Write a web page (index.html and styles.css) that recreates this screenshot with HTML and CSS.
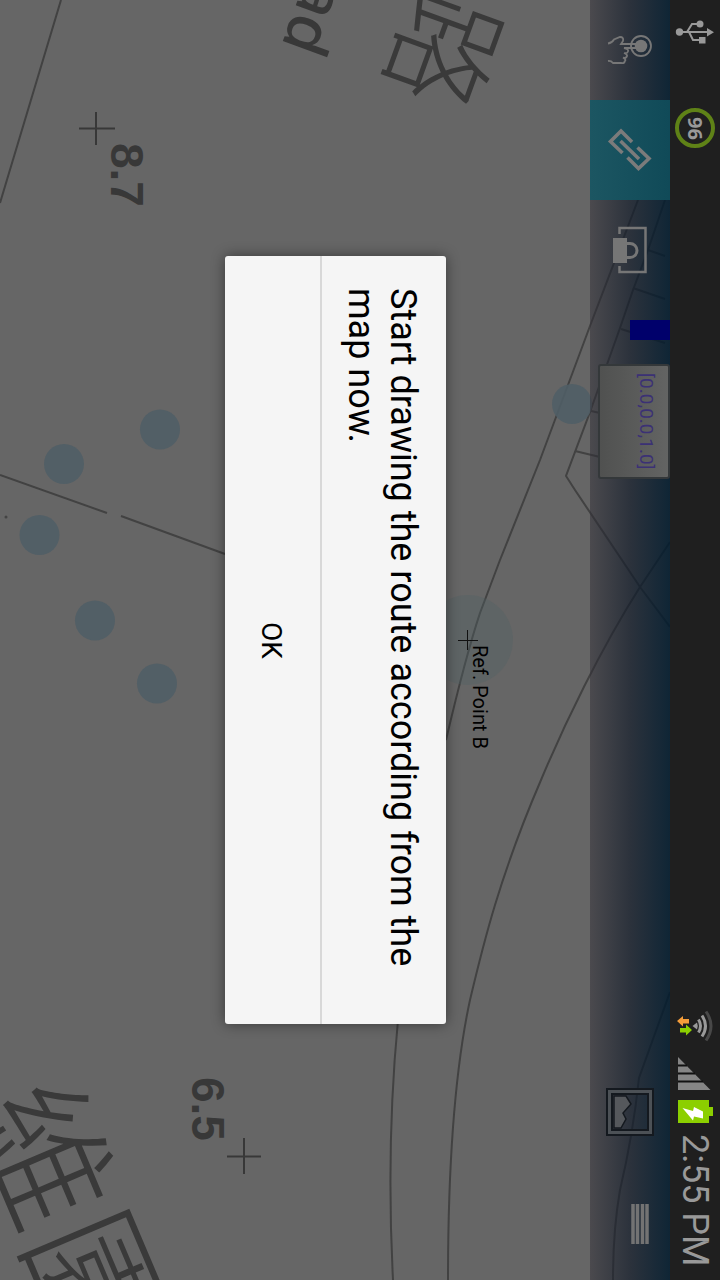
FILE: index.html
```html
<!DOCTYPE html>
<html lang="en">
<head>
<meta charset="utf-8">
<meta name="viewport" content="width=device-width, initial-scale=1">
<title>Route map</title>
<link rel="stylesheet" href="styles.css">
</head>
<body>
<div class="screen">
  <header class="status">
    <svg class="status-usb" viewBox="674 12 42 42" aria-label="USB connected">
      <g fill="none" stroke="#999" stroke-width="2"><path d="M680 32H708M687 32L692 24H699M689 32L693 40H700"/></g>
      <g fill="#999"><circle cx="679.500" cy="32" r="3.700"/><circle cx="700" cy="24" r="3.500"/><path d="M699 37h6.500v6.500H699zM707 28l7 4.300-7 4.300z"/></g>
    </svg>
    <div class="charge"><span>96</span></div>
    <div class="status-end">
      <svg class="status-wifi" viewBox="674 1004 42 40" aria-label="Wi-Fi">
        <path d="M677 1019l6-5v3h6v4.500h-6v3z" fill="#f59d3a"/>
        <path d="M692 1028l-6 5.500v-3h-6v-4.500h6v-3.500z" fill="#8ccf00"/>
        <path d="M692.500 1024L697 1020.500Q698.500 1024 697 1027.500z" fill="#999"/>
        <g fill="none" stroke-width="3">
          <path d="M698.500 1017.500Q702.500 1024 698.500 1030.500" stroke="#999"/>
          <path d="M702 1013.500Q709 1024 702 1034.500" stroke="#999"/>
          <path d="M706 1009.500Q716 1024 706 1038.500" stroke="#484848"/>
        </g>
      </svg>
      <svg class="status-signal" viewBox="674 1052 42 40" aria-label="Signal">
        <path d="M678 1055V1088H710.500z" fill="#858585"/>
        <path d="M678 1063.500H687M678 1071.500H695M678 1079.500H703" stroke="#111" stroke-width="2"/>
      </svg>
      <svg class="status-battery" viewBox="674 1092 42 34" aria-label="Charging">
        <path d="M678 1098H709V1105H713V1114H709V1121H678z" fill="#8ccf00"/>
        <path d="M682.500 1106l10.500 3 1-4 9 4.500v7l-9-2-1 4z" fill="#fff"/>
      </svg>
      <time class="clock">2:55 PM</time>
    </div>
  </header>

  <main class="stage">
    <svg class="map" viewBox="0 0 670 1280" preserveAspectRatio="xMaxYMid slice" aria-label="Map">
      <g class="road">
        <path d="M61 0L0 203M0 475L107 513M121 516L225 554M638 200L590 326 540 460 500 560 480 613Q466 655 446 740"/>
        <path d="M665 200L648 250 633 290 620 328 590 412 566 476 575 490 640 587 670 627"/>
        <path d="M648 250L665 256M633 288L665 299M621 329L665 343M591 411L600 413M575 451L600 457"/>
        <path d="M670 542L640 587C600 650 564 725 541 780 500 875 483 945 470 1000 457 1060 448 1150 448 1280"/>
        <path d="M398 1020Q386 1145 393 1280M670 992L639 1078Q633 1135 620 1190 613 1230 613 1280"/>
      </g>
      <circle cx="6" cy="517" r="1.500" fill="#444"/>
      <path class="cross" d="M79 128.500H115M96 112V145M227 1156.500H261M244 1138V1174"/>
      <g class="stop">
        <circle cx="160" cy="429.500" r="20"/><circle cx="64" cy="464" r="20"/><circle cx="39.500" cy="535" r="20"/>
        <circle cx="95" cy="620.500" r="20"/><circle cx="157" cy="683.500" r="20"/><circle cx="572" cy="404" r="20"/>
      </g>
      <circle class="zone" cx="468" cy="640" r="45"/>
      <path d="M458 640.500H478M467.500 630V650" stroke="#111" fill="none"/>
      <text class="ref" transform="translate(473 645) rotate(90)">Ref. Point B</text>
      <text class="height" transform="translate(111 143) rotate(90)">8.7</text>
      <text class="height" transform="translate(192 1077) rotate(90)">6.5</text>
      <text class="road-name" text-anchor="end" transform="translate(281 46) rotate(110)">Road</text>
      <text class="road-name-zh" transform="translate(423 -19) rotate(110)">路</text>
      <text class="park-name-zh" transform="translate(-34 1110) rotate(67)">維園</text>
    </svg>

    <nav class="toolbar" aria-label="Map tools">
      <button class="tool" type="button" aria-label="Touch">
        <svg class="icon" viewBox="605 25 50 50" fill="none" stroke="#777" stroke-width="1.800">
          <circle cx="641" cy="46" r="10"/>
          <circle cx="641" cy="46" r="6.300" fill="#777" stroke="none"/>
          <path d="M608 43.500Q612 43 614 39.500L620 37Q624 37 623 41L621 44H636M636 48H624Q629 49 628 51.500 627 54 624 53 628.500 55 626.500 57 625 58.500 623 57.500 627 60 624.500 61.500 625 63.500 621 63H613Q611 60.500 608 61"/>
        </svg>
      </button>
      <button class="tool tool-active" type="button" aria-label="Link">
        <svg class="icon" viewBox="605 125 50 50" fill="none" stroke="#7b7b7b" stroke-width="3.600">
          <path d="M632 142L621 131 610.500 141.500 622.500 153M620.500 141L639 159M637.500 147.500L649 158.500 638.500 168.500 627.500 157.500"/>
        </svg>
      </button>
      <button class="tool" type="button" aria-label="Lock">
        <svg class="icon" viewBox="605 225 50 50">
          <path d="M619.500 234V228H645.500V272H619.500V266" fill="none" stroke="#767676" stroke-width="2.500"/>
          <path d="M613 238H627V263H613z" fill="#767676"/>
          <path d="M627 243.500H630A7 7 0 0 1 630 257.500H627" fill="none" stroke="#767676" stroke-width="3"/>
        </svg>
      </button>
      <span class="swatch"></span>
      <button class="value" type="button"><span>[0.0,0.0,1.0]</span></button>
      <button class="tool tool-wide tool-end" type="button" aria-label="Picture">
        <svg class="icon" viewBox="605 1087 50 50">
          <path d="M609.500 1091.500H650.500V1132.500H609.500z" fill="none" stroke="#4c5156" stroke-width="4"/>
          <path d="M607 1089H653V1135H607zM612 1094H648V1130H612z" fill="none" stroke="#14191f" stroke-width="2"/>
          <path d="M614 1096H626L631 1104 623 1113 626 1119 621 1128H614z" fill="#55585c" stroke="#14191f" stroke-width="1.500"/>
        </svg>
      </button>
      <button class="tool tool-wide" type="button" aria-label="Menu">
        <svg class="icon icon-menu" viewBox="615 1199 50 50">
          <path d="M633 1204V1244M637.500 1204V1244M642.500 1204V1244M647 1204V1244" stroke="#737373" stroke-width="3.500"/>
        </svg>
      </button>
    </nav>

    <div class="overlay">
      <section class="dialog" role="alertdialog" aria-modal="true" aria-labelledby="message">
        <p class="message" id="message">Start drawing the route according from the map now.</p>
        <button class="ok" type="button"><span>OK</span></button>
      </section>
    </div>
  </main>
</div>
</body>
</html>
```
FILE: styles.css
```css
* {
  box-sizing: border-box;
}

body {
  margin: 0;
  background: #666;
  font-family: Roboto, "Noto Sans", sans-serif;
}

button {
  margin: 0;
  padding: 0;
  border: 0;
  background: none;
  font: inherit;
  color: inherit;
}

/* The device is held sideways: lines run down, blocks stack right to left. */
.screen {
  display: flex;
  flex-direction: row-reverse;
  min-height: 100vh;
}

.status {
  display: flex;
  flex-direction: column;
  align-items: center;
  width: 50px;
  padding-top: 12px;
  background: #1f1f1f;
  color: #999;
}

.status svg {
  display: block;
  flex: none;
  width: 42px;
}

.status-usb {
  height: 42px;
}

.charge {
  display: flex;
  align-items: center;
  justify-content: center;
  width: 40px;
  height: 40px;
  margin-top: 54px;
  border: 4px solid #5f8217;
  border-radius: 50%;
  font: bold 20px "Noto Sans", sans-serif;
  line-height: 20px;
}

.charge span,
.clock,
.value span,
.message,
.ok span {
  writing-mode: vertical-rl;
}

.status-end {
  display: flex;
  flex-direction: column;
  align-items: center;
  margin-top: auto;
  padding-bottom: 14px;
}

.status-wifi {
  height: 40px;
}

.status-signal {
  height: 40px;
  margin-top: 8px;
}

.status-battery {
  height: 34px;
}

.clock {
  margin-top: 6px;
  font-size: 36px;
  line-height: 42px;
  white-space: nowrap;
}

.stage {
  position: relative;
  display: flex;
  flex: 1;
  justify-content: flex-end;
  overflow: hidden;
}

.map {
  position: absolute;
  inset: 0;
  width: 100%;
  height: 100%;
}

.road {
  fill: none;
  stroke: #424242;
  stroke-width: 2;
}

.cross {
  fill: none;
  stroke: #383838;
  stroke-width: 2;
}

.stop {
  fill: #505e66;
  fill-opacity: 0.9;
}

.zone {
  fill: #506064;
  fill-opacity: 0.35;
}

.ref {
  font-size: 20px;
  fill: #000;
}

.height {
  font: bold 46px "Liberation Sans", sans-serif;
  fill: #383838;
}

.road-name {
  font: 500 62px "Noto Sans", sans-serif;
  fill: #383838;
}

.road-name-zh,
.park-name-zh {
  font-family: "Noto Sans CJK TC", sans-serif;
  font-weight: 300;
  fill: #3a3a3a;
}

.road-name-zh {
  font-size: 115px;
}

.park-name-zh {
  font-size: 142px;
}

.toolbar {
  position: relative;
  display: flex;
  flex-direction: column;
  width: 80px;
  background: linear-gradient(to right, rgb(48 46 54 / 0.5), rgb(19 28 42 / 0.7) 50%, rgb(0 26 45 / 0.85));
}

.tool {
  display: flex;
  flex: none;
  align-items: center;
  justify-content: center;
  height: 100px;
}

.tool-active {
  background: linear-gradient(to right, #1c5662, #104a58);
}

.tool-wide {
  height: 112px;
}

.tool-end {
  margin-top: auto;
}

.icon {
  width: 50px;
  height: 50px;
}

.icon-menu {
  margin-left: 20px;
}

.swatch {
  align-self: flex-end;
  width: 40px;
  height: 20px;
  margin-top: 20px;
  background: #00006b;
}

.value {
  display: flex;
  align-items: center;
  align-self: flex-end;
  justify-content: center;
  width: 72px;
  height: 115px;
  margin-top: 24px;
  padding-left: 24px;
  border: 2px solid #34383a;
  border-radius: 3px;
  background: linear-gradient(to right, #505150, #636463);
  color: #3b3175;
  font-size: 19px;
  line-height: 24px;
}

.overlay {
  position: absolute;
  inset: 0;
  display: flex;
  align-items: center;
  justify-content: center;
}

.dialog {
  display: flex;
  flex-direction: row-reverse;
  height: 60%;
  border-radius: 3px;
  background: #f5f5f5;
  box-shadow: 0 0 14px rgb(0 0 0 / 0.45);
}

.message {
  margin: 0;
  padding: 32px 22px 32px 18px;
  color: #000;
  font-size: 36px;
  line-height: 42px;
}

.ok {
  display: flex;
  align-items: center;
  justify-content: center;
  width: 97px;
  padding-right: 2px;
  border-right: 2px solid #d8d8d8;
  color: #000;
  font-size: 28px;
  line-height: 34px;
}
```
